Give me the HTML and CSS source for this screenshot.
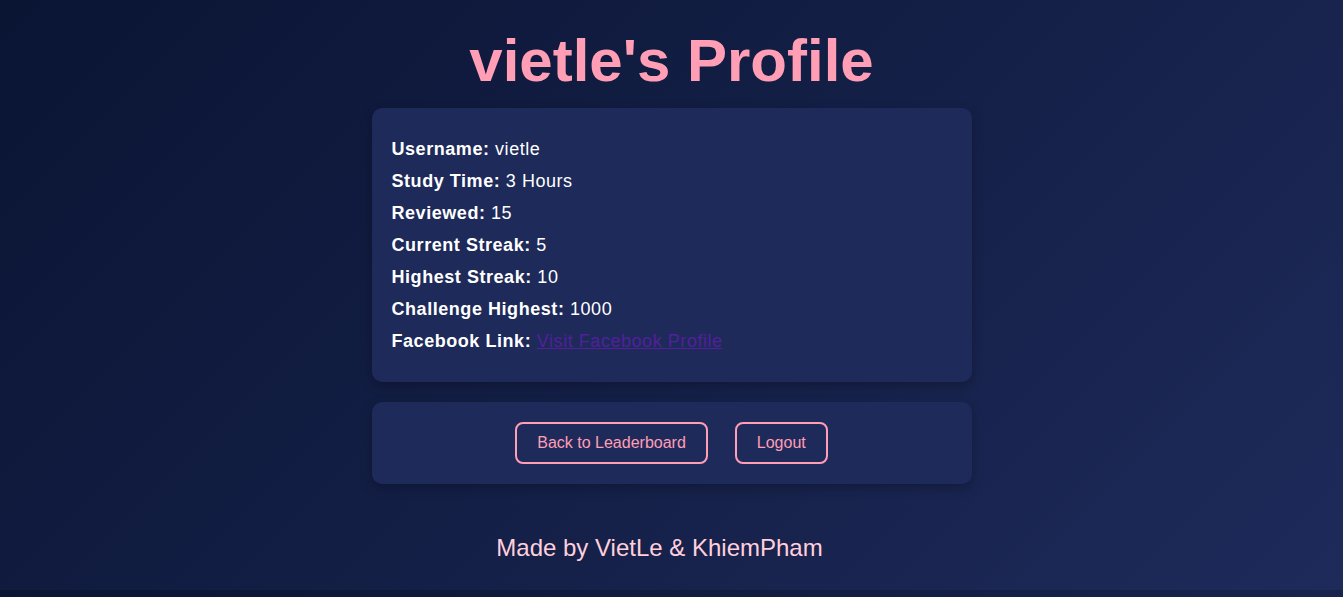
FILE: index.html
```html
<!DOCTYPE html>
<html lang="en">
<head>
<meta charset="UTF-8">
<title>vietle's Profile</title>
<link rel="stylesheet" href="styles.css">
</head>
<body>
  <main class="page">
    <h1 class="title">vietle's Profile</h1>
    <section class="card info">
      <p class="row"><strong>Username:</strong> vietle</p>
      <p class="row"><strong>Study Time:</strong> 3 Hours</p>
      <p class="row"><strong>Reviewed:</strong> 15</p>
      <p class="row"><strong>Current Streak:</strong> 5</p>
      <p class="row"><strong>Highest Streak:</strong> 10</p>
      <p class="row"><strong>Challenge Highest:</strong> 1000</p>
      <p class="row"><strong>Facebook Link:</strong> <a class="fb-link" href="#">Visit Facebook Profile</a></p>
    </section>
    <section class="card actions">
      <button class="btn" type="button">Back to Leaderboard</button>
      <button class="btn" type="button">Logout</button>
    </section>
  </main>
  <footer class="footer">Made by VietLe &amp; KhiemPham</footer>
</body>
</html>
```

FILE: styles.css
```css
html {
  margin: 0;
  padding: 0;
}

body {
  margin: 0;
  font-family: "Liberation Sans", Arial, sans-serif;
  color: #ffffff;
  background: linear-gradient(135deg, #0a1433 0%, #1e2a5a 100%);
}

.page {
  display: flex;
  flex-direction: column;
  align-items: center;
  padding-top: 26px;
}

.title {
  margin: 0 0 13px;
  font-size: 60px;
  font-weight: bold;
  line-height: 69px;
  color: #ff9eb5;
}

.card {
  box-sizing: border-box;
  width: 600px;
  background: #1e2a5a;
  border-radius: 10px;
  box-shadow: 0 4px 12px rgba(0, 0, 0, 0.25);
}

.info {
  padding: 20px;
}

.row {
  margin: 10px 0;
  font-size: 18px;
  line-height: 22px;
  letter-spacing: 0.55px;
}

.row strong {
  font-weight: bold;
}

.fb-link {
  color: #52209a;
  text-decoration: underline;
}

.actions {
  margin-top: 20px;
  padding: 20px;
  display: flex;
  justify-content: center;
  gap: 27px;
}

.btn {
  font-family: "Liberation Sans", Arial, sans-serif;
  font-size: 16px;
  line-height: 18px;
  color: #ff9eb5;
  background: transparent;
  border: 2px solid #ff9eb5;
  border-radius: 8px;
  padding: 10px 20px;
  cursor: pointer;
}

.footer {
  margin-top: 50px;
  padding: 0 24px 28px 0;
  text-align: center;
  font-size: 24px;
  line-height: 28px;
  color: #ffd0dc;
}
```
